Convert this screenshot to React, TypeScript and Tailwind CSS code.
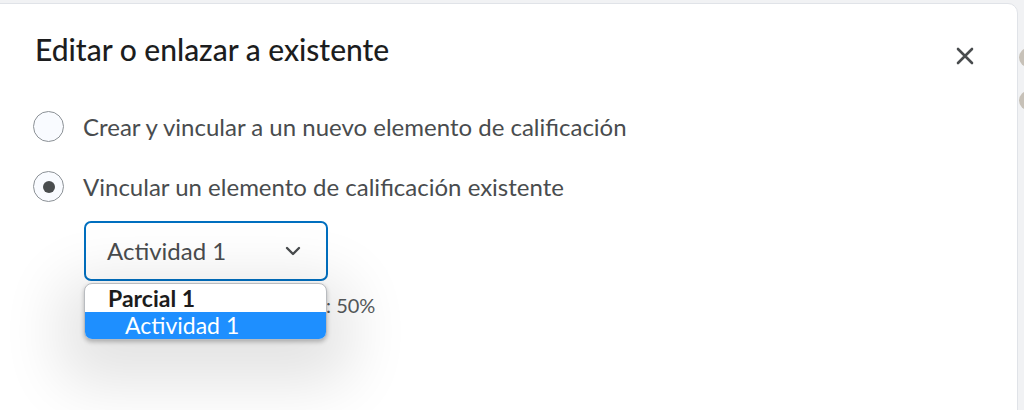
export default function App() {
  return (
    <div className="relative h-[410px] w-[1024px] overflow-hidden bg-[#f1f2f4] font-['Lato','Noto_Sans',sans-serif] text-[#494c4e]">
      {/* page bits peeking out on the right */}
      <div className="absolute left-[1019px] top-[48px] h-[19px] w-[19px] rounded-full bg-[#c7c1b8]" />
      <div className="absolute left-[1019px] top-[91px] h-[19px] w-[19px] rounded-full bg-[#c7c1b8]" />

      <div className="ml-[-12px] mt-[3px] h-[430px] w-[1030px] rounded-tr-[10px] border border-[#e0e3e8] bg-white">
        <div className="flex items-start justify-between pl-[46px] pr-[42px] pt-[25px]">
          <h1 className="text-[30px] font-medium leading-[40px] text-[#1c1d1e]">Editar o enlazar a existente</h1>
          <button className="mt-[17px] text-[#494c4e]">
            <svg width="20" height="20" viewBox="0 0 20 20" fill="none" stroke="currentColor" strokeWidth="2.6" strokeLinecap="round">
              <path d="M3 3 L17 17 M17 3 L3 17" />
            </svg>
          </button>
        </div>

        <div className="mt-[42px] flex flex-col gap-[29px] pl-[44px]">
          <label className="flex items-center gap-[19px]">
            <span className="h-[31px] w-[31px] rounded-full border border-[#8c9196] bg-[#f9fbff]" />
            <span className="text-[24px] leading-[31px]">Crear y vincular a un nuevo elemento de calificación</span>
          </label>
          <label className="flex items-center gap-[19px]">
            <span className="flex h-[31px] w-[31px] items-center justify-center rounded-full border border-[#8c9196] bg-[#f9fbff]">
              <span className="h-[12px] w-[12px] rounded-full bg-[#494c4e]" />
            </span>
            <span className="text-[24px] leading-[31px]">Vincular un elemento de calificación existente</span>
          </label>
        </div>

        <div className="relative ml-[95px] mt-[19px]">
          <div className="flex h-[60px] w-[244px] items-center justify-between rounded-[7px] border-2 border-[#006fbf] bg-white pl-[21px] pr-[24px]">
            <span className="text-[24px]">Actividad 1</span>
            <svg width="18" height="12" viewBox="0 0 18 12" fill="none" stroke="#494c4e" strokeWidth="2.4" strokeLinecap="round" strokeLinejoin="round">
              <path d="M3 3 L9 9 L15 3" />
            </svg>
          </div>
          <div className="mt-[11px] text-[20px] leading-[26px] text-[#565a5c]">Ponderación en la categoría: 50%</div>

          <div className="absolute left-0 top-[62px] w-[243px] overflow-hidden rounded-[8px] border border-[#b9bcc0] bg-white shadow-[0_2px_4px_rgba(0,0,0,0.25),0_20px_60px_24px_rgba(0,0,0,0.11)]">
            <div className="pl-[23px] text-[23px] font-bold leading-[28px] text-[#1c1c1c]">Parcial 1</div>
            <div className="bg-[#1e8fff] pb-[1px] pl-[40px] text-[23px] leading-[26px] text-white">Actividad 1</div>
          </div>
        </div>
      </div>
    </div>
  );
}
